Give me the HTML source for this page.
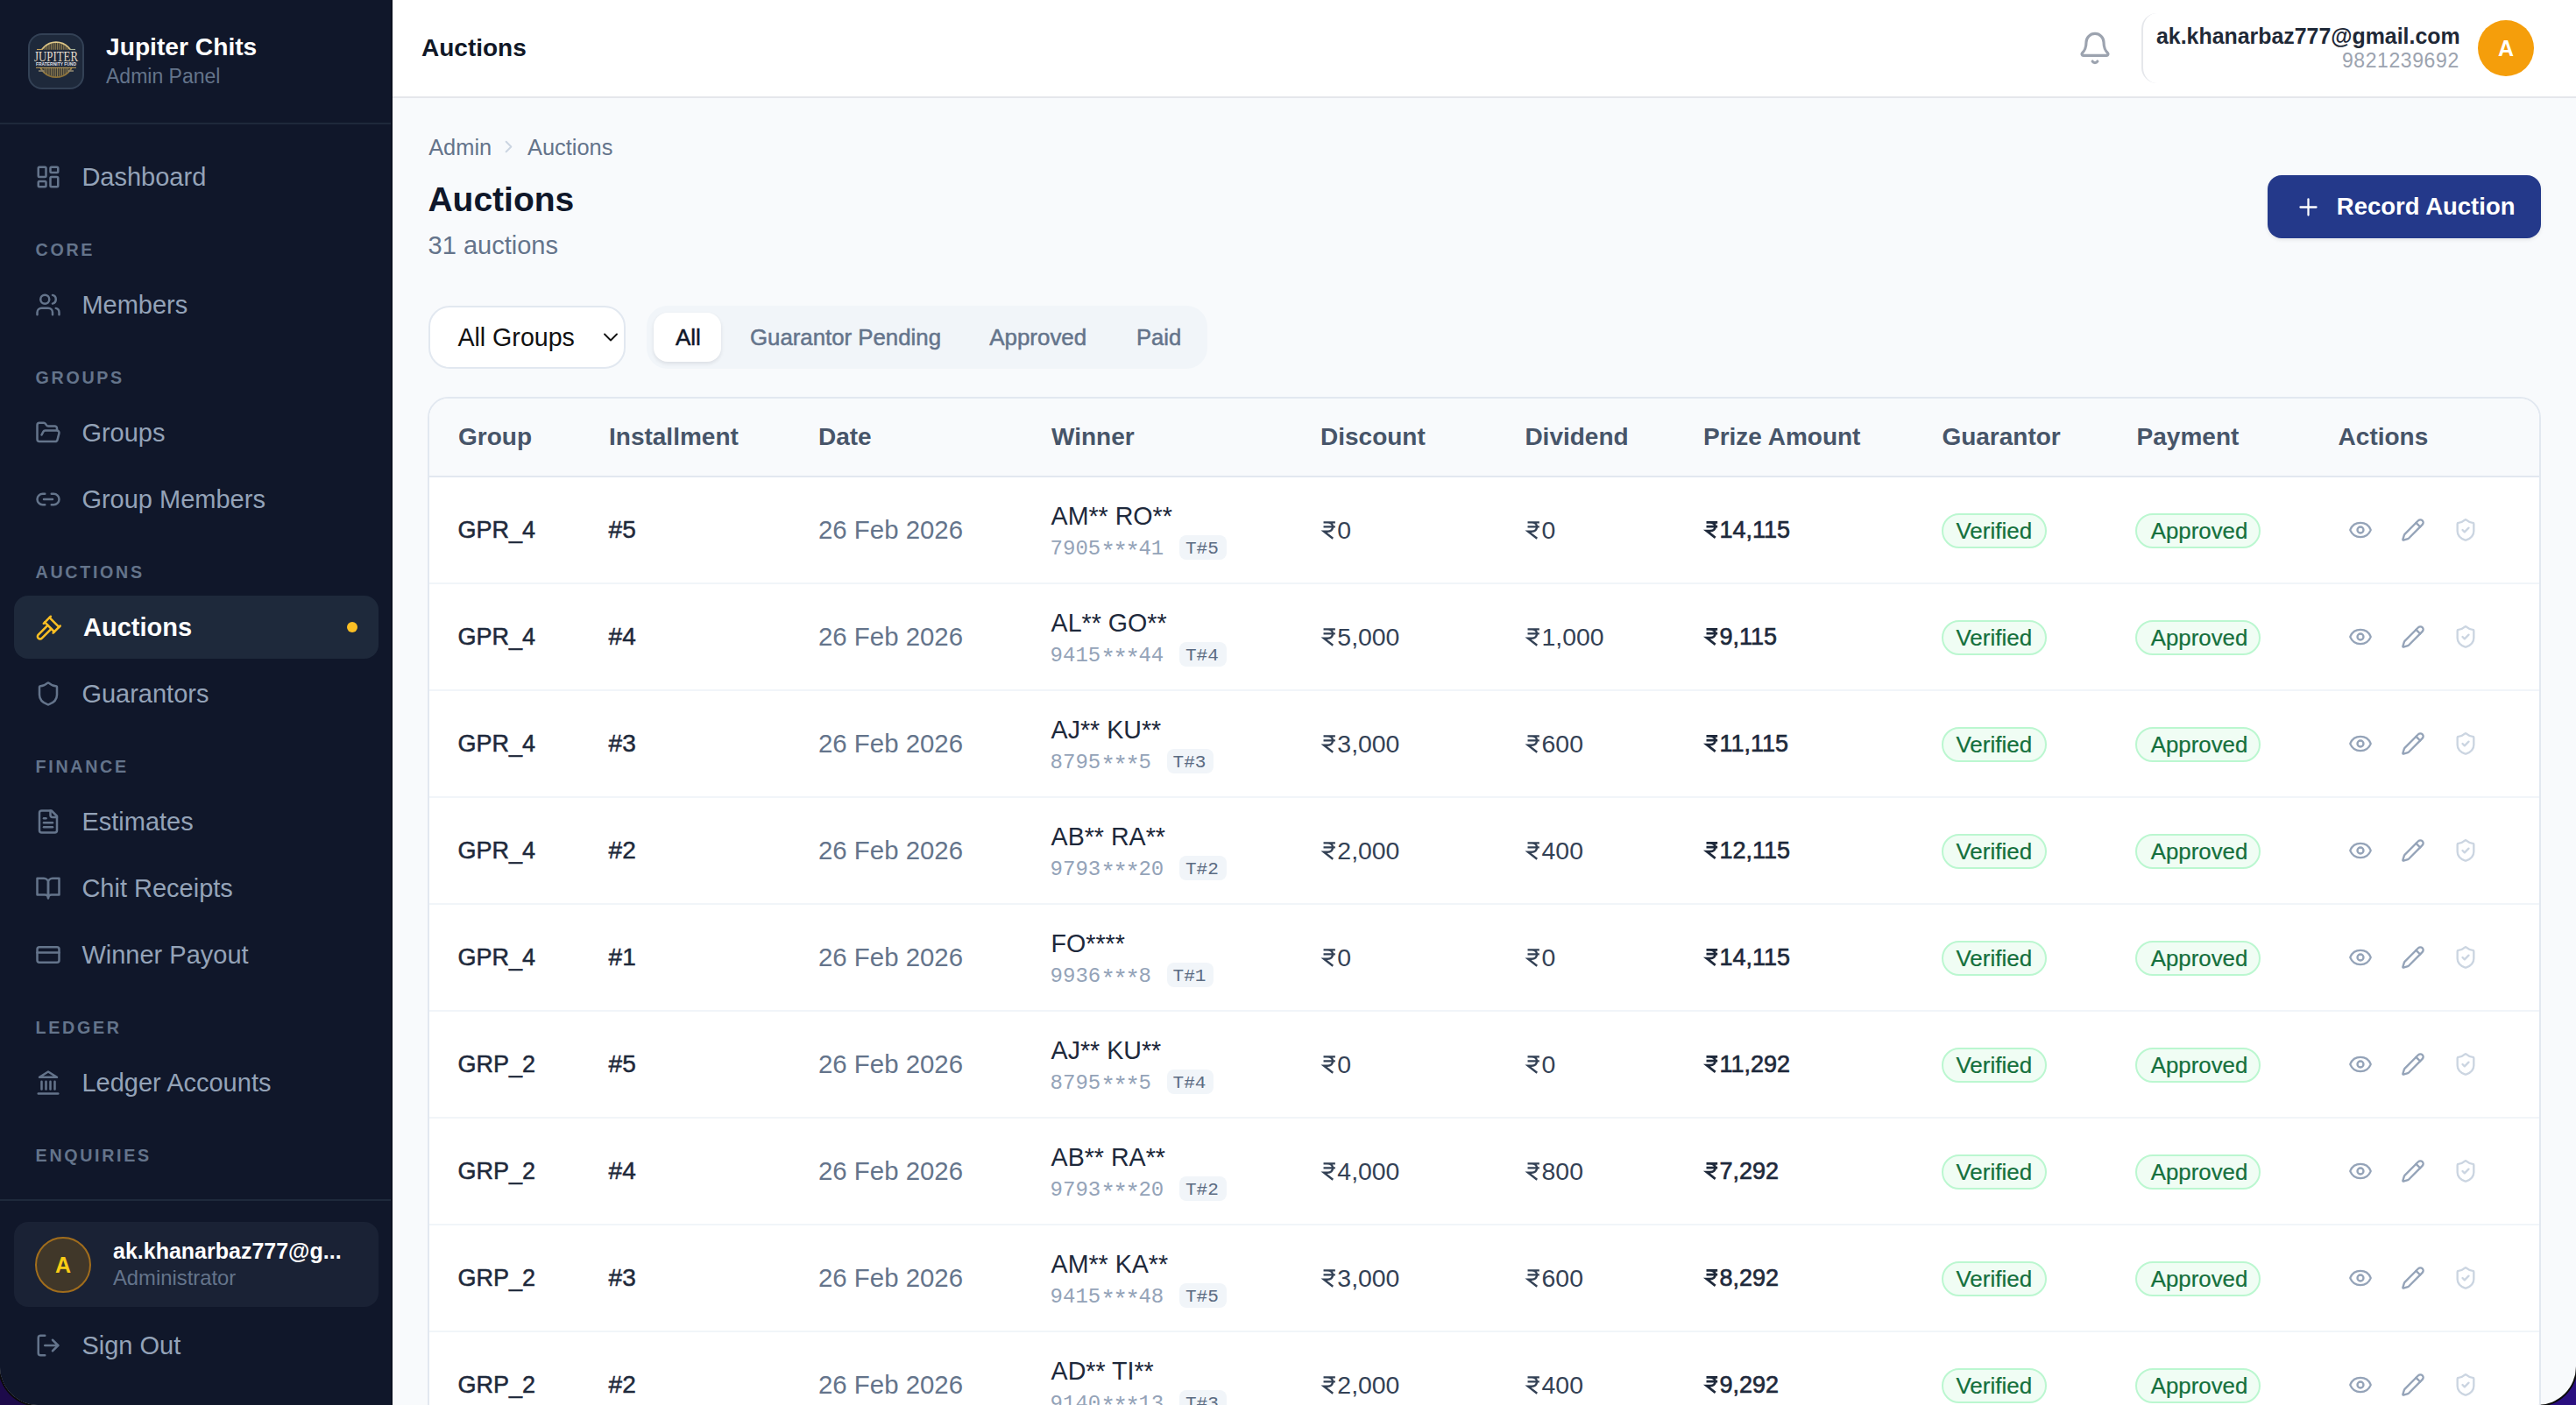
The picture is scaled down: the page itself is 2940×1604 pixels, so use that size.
<!DOCTYPE html><html><head><meta charset="utf-8"><title>Auctions</title><style>
*{box-sizing:border-box;margin:0;padding:0}
html,body{width:2940px;height:1604px;overflow:hidden;background:#2a0f7a}
body{background:linear-gradient(90deg,#1d0a4a,#2a0f80)}
#z{width:2940px;height:1604px;position:relative;overflow:hidden;border-radius:0 0 44px 44px;background:#f8fafc;font-family:"Liberation Sans",sans-serif;box-shadow:0 0 0 2px #0a0a0a}
.t{position:absolute;white-space:nowrap}
.ic{position:absolute;display:block}
.rs{display:inline-block;width:0.5em;height:0.7em;vertical-align:0;margin-right:0.07em;overflow:visible}
.abs{position:absolute}
.ast{position:relative;top:5.2px;font-size:28px;line-height:0;letter-spacing:-2.8px;margin-right:1.2px}
</style></head><body><div id="z">
<div class="abs" style="left:0;top:0;width:448px;height:1604px;background:#10172a;border-right:2px solid #0b1120"></div>
<div class="abs" style="left:0;top:140px;width:446px;height:2px;background:#1e293b"></div>
<svg class="abs" style="left:32px;top:38px;width:64px;height:64px" viewBox="0 0 32 32"><defs><linearGradient id="gd" x1="0" y1="0" x2="0" y2="1"><stop offset="0" stop-color="#e0c98a"/><stop offset="1" stop-color="#8a6f36"/></linearGradient><linearGradient id="gt" x1="0" y1="0" x2="0" y2="1"><stop offset="0" stop-color="#f4efe6"/><stop offset="1" stop-color="#cbbfa6"/></linearGradient><clipPath id="cc"><circle cx="16" cy="15.1" r="9.6"/></clipPath></defs><rect x="0.5" y="0.5" width="31" height="31" rx="7.5" fill="#1e293b" stroke="#334155"/><circle cx="16" cy="15.1" r="10" fill="#3a3a36" stroke="url(#gd)" stroke-width="0.9"/><g stroke="#b79f62" stroke-width="0.4" opacity="0.9" clip-path="url(#cc)"><line x1="9.6" y1="5" x2="9.6" y2="25.2"/><line x1="10.8" y1="5" x2="10.8" y2="25.2"/><line x1="12" y1="5" x2="12" y2="25.2"/><line x1="13.2" y1="5" x2="13.2" y2="25.2"/><line x1="14.4" y1="5" x2="14.4" y2="25.2"/><line x1="15.6" y1="5" x2="15.6" y2="25.2"/><line x1="16.8" y1="5" x2="16.8" y2="25.2"/><line x1="18" y1="5" x2="18" y2="25.2"/><line x1="19.2" y1="5" x2="19.2" y2="25.2"/><line x1="20.4" y1="5" x2="20.4" y2="25.2"/><line x1="21.6" y1="5" x2="21.6" y2="25.2"/><line x1="22.8" y1="5" x2="22.8" y2="25.2"/></g><rect x="3" y="9.4" width="26" height="10.2" fill="#1e293b"/><line x1="4.5" y1="19.6" x2="27.5" y2="19.6" stroke="#c9a45a" stroke-width="0.55"/><line x1="5" y1="9.25" x2="8.3" y2="9.25" stroke="#c9a45a" stroke-width="0.55"/><line x1="23.7" y1="9.25" x2="27" y2="9.25" stroke="#aab59a" stroke-width="0.55"/><text x="16" y="15.95" text-anchor="middle" font-family="Liberation Serif" font-size="8.2" fill="url(#gt)" textLength="25" lengthAdjust="spacingAndGlyphs">JUPITER</text><text x="16" y="18.5" text-anchor="middle" font-family="Liberation Sans" font-weight="bold" font-size="2.6" fill="#e2e2ea" textLength="23" lengthAdjust="spacingAndGlyphs">FRATERNITY FUND</text><rect x="6" y="21" width="3.2" height="1" fill="#8c8470" opacity="0.8"/><rect x="22.8" y="21" width="3.2" height="1" fill="#8c8470" opacity="0.8"/></svg>
<div class="t" style="left:121px;top:33.3px;font-size:28.2px;line-height:40px;color:#ffffff;font-weight:bold;">Jupiter Chits</div>
<div class="t" style="left:121px;top:67px;font-size:23px;line-height:40px;color:#64748b;font-weight:normal;">Admin Panel</div>
<svg class="ic" style="left:40px;top:187px;width:30px;height:30px;" viewBox="0 0 24 24" fill="none" stroke="#64748b" stroke-width="2" stroke-linecap="round" stroke-linejoin="round"><rect width="7" height="9" x="3" y="3" rx="1"/><rect width="7" height="5" x="14" y="3" rx="1"/><rect width="7" height="9" x="14" y="12" rx="1"/><rect width="7" height="5" x="3" y="16" rx="1"/></svg><div class="t" style="left:93.4px;top:182px;font-size:29px;line-height:40px;color:#94a3b8;font-weight:normal;">Dashboard</div>
<div class="t" style="left:40.6px;top:265px;font-size:19.7px;line-height:40px;color:#64748b;font-weight:bold;letter-spacing:2.66px;">CORE</div>
<svg class="ic" style="left:40px;top:333px;width:30px;height:30px;" viewBox="0 0 24 24" fill="none" stroke="#64748b" stroke-width="2" stroke-linecap="round" stroke-linejoin="round"><path d="M16 21v-2a4 4 0 0 0-4-4H6a4 4 0 0 0-4 4v2"/><circle cx="9" cy="7" r="4"/><path d="M22 21v-2a4 4 0 0 0-3-3.87"/><path d="M16 3.13a4 4 0 0 1 0 7.75"/></svg><div class="t" style="left:93.4px;top:328px;font-size:29px;line-height:40px;color:#94a3b8;font-weight:normal;">Members</div>
<div class="t" style="left:40.6px;top:411px;font-size:19.7px;line-height:40px;color:#64748b;font-weight:bold;letter-spacing:2.66px;">GROUPS</div>
<svg class="ic" style="left:40px;top:479px;width:30px;height:30px;" viewBox="0 0 24 24" fill="none" stroke="#64748b" stroke-width="2" stroke-linecap="round" stroke-linejoin="round"><path d="m6 14 1.5-2.9A2 2 0 0 1 9.24 10H20a2 2 0 0 1 1.94 2.5l-1.54 6a2 2 0 0 1-1.95 1.5H4a2 2 0 0 1-2-2V5a2 2 0 0 1 2-2h3.9a2 2 0 0 1 1.69.9l.81 1.2a2 2 0 0 0 1.67.9H18a2 2 0 0 1 2 2v2"/></svg><div class="t" style="left:93.4px;top:474px;font-size:29px;line-height:40px;color:#94a3b8;font-weight:normal;">Groups</div>
<svg class="ic" style="left:40px;top:555px;width:30px;height:30px;" viewBox="0 0 24 24" fill="none" stroke="#64748b" stroke-width="2" stroke-linecap="round" stroke-linejoin="round"><path d="M9 17H7A5 5 0 0 1 7 7h2"/><path d="M15 7h2a5 5 0 1 1 0 10h-2"/><line x1="8" x2="16" y1="12" y2="12"/></svg><div class="t" style="left:93.4px;top:550px;font-size:29px;line-height:40px;color:#94a3b8;font-weight:normal;">Group Members</div>
<div class="t" style="left:40.6px;top:632.6px;font-size:19.7px;line-height:40px;color:#64748b;font-weight:bold;letter-spacing:2.66px;">AUCTIONS</div>
<div class="abs" style="left:16px;top:680px;width:416px;height:72px;border-radius:16px;background:#1e293b"></div><svg class="ic" style="left:38.6px;top:701.2px;width:32.4px;height:32.4px;" viewBox="0 0 24 24" fill="none" stroke="#fbbf24" stroke-width="1.85" stroke-linecap="round" stroke-linejoin="round"><path d="m14.5 12.5-8 8a2.119 2.119 0 1 1-3-3l8-8"/><path d="m16 16 6-6"/><path d="m8 8 6-6"/><path d="m9 7 8 8"/><path d="m21 11-8-8"/></svg><div class="t" style="left:95px;top:696px;font-size:29px;line-height:40px;color:#ffffff;font-weight:bold;">Auctions</div><div class="abs" style="left:396px;top:710px;width:12px;height:12px;border-radius:6px;background:#fbbf24"></div>
<svg class="ic" style="left:40px;top:777px;width:30px;height:30px;" viewBox="0 0 24 24" fill="none" stroke="#64748b" stroke-width="2" stroke-linecap="round" stroke-linejoin="round"><path d="M20 13c0 5-3.5 7.5-7.66 8.95a1 1 0 0 1-.67-.01C7.5 20.5 4 18 4 13V6a1 1 0 0 1 1-1c2 0 4.5-1.2 6.24-2.72a1.17 1.17 0 0 1 1.52 0C14.51 3.810 17 5 19 5a1 1 0 0 1 1 1z"/></svg><div class="t" style="left:93.4px;top:772px;font-size:29px;line-height:40px;color:#94a3b8;font-weight:normal;">Guarantors</div>
<div class="t" style="left:40.6px;top:854.6px;font-size:19.7px;line-height:40px;color:#64748b;font-weight:bold;letter-spacing:2.66px;">FINANCE</div>
<svg class="ic" style="left:40px;top:923px;width:30px;height:30px;" viewBox="0 0 24 24" fill="none" stroke="#64748b" stroke-width="2" stroke-linecap="round" stroke-linejoin="round"><path d="M15 2H6a2 2 0 0 0-2 2v16a2 2 0 0 0 2 2h12a2 2 0 0 0 2-2V7Z"/><path d="M14 2v4a2 2 0 0 0 2 2h4"/><path d="M10 9H8"/><path d="M16 13H8"/><path d="M16 17H8"/></svg><div class="t" style="left:93.4px;top:918px;font-size:29px;line-height:40px;color:#94a3b8;font-weight:normal;">Estimates</div>
<svg class="ic" style="left:40px;top:999px;width:30px;height:30px;" viewBox="0 0 24 24" fill="none" stroke="#64748b" stroke-width="2" stroke-linecap="round" stroke-linejoin="round"><path d="M2 3h6a4 4 0 0 1 4 4v14a3 3 0 0 0-3-3H2z"/><path d="M22 3h-6a4 4 0 0 0-4 4v14a3 3 0 0 1 3-3h7z"/></svg><div class="t" style="left:93.4px;top:994px;font-size:29px;line-height:40px;color:#94a3b8;font-weight:normal;">Chit Receipts</div>
<svg class="ic" style="left:40px;top:1075px;width:30px;height:30px;" viewBox="0 0 24 24" fill="none" stroke="#64748b" stroke-width="2" stroke-linecap="round" stroke-linejoin="round"><rect width="20" height="14" x="2" y="5" rx="2"/><line x1="2" x2="22" y1="10" y2="10"/></svg><div class="t" style="left:93.4px;top:1070px;font-size:29px;line-height:40px;color:#94a3b8;font-weight:normal;">Winner Payout</div>
<div class="t" style="left:40.6px;top:1152.6px;font-size:19.7px;line-height:40px;color:#64748b;font-weight:bold;letter-spacing:2.66px;">LEDGER</div>
<svg class="ic" style="left:40px;top:1221px;width:30px;height:30px;" viewBox="0 0 24 24" fill="none" stroke="#64748b" stroke-width="2" stroke-linecap="round" stroke-linejoin="round"><line x1="3" x2="21" y1="22" y2="22"/><line x1="6" x2="6" y1="18" y2="11"/><line x1="10" x2="10" y1="18" y2="11"/><line x1="14" x2="14" y1="18" y2="11"/><line x1="18" x2="18" y1="18" y2="11"/><polygon points="12 2 20 7 4 7"/></svg><div class="t" style="left:93.4px;top:1216px;font-size:29px;line-height:40px;color:#94a3b8;font-weight:normal;">Ledger Accounts</div>
<div class="t" style="left:40.6px;top:1299px;font-size:19.7px;line-height:40px;color:#64748b;font-weight:bold;letter-spacing:2.66px;">ENQUIRIES</div>
<div class="abs" style="left:0;top:1369px;width:446px;height:2px;background:#1e293b"></div>
<div class="abs" style="left:0;top:1371px;width:446px;height:234px;background:#10172a"></div>
<div class="abs" style="left:16px;top:1395px;width:416px;height:97px;border-radius:16px;background:#1a2235"></div>
<div class="abs" style="left:40px;top:1412px;width:64px;height:64px;border-radius:32px;background:#403729;border:2px solid #a16d1c"></div>
<div class="t" style="left:40px;top:1424px;font-size:25px;line-height:40px;color:#facc15;font-weight:bold;width:64px;text-align:center;">A</div>
<div class="t" style="left:129px;top:1408px;font-size:25px;line-height:40px;color:#ffffff;font-weight:bold;">ak.khanarbaz777@g...</div>
<div class="t" style="left:129px;top:1439px;font-size:23.8px;line-height:40px;color:#64748b;font-weight:normal;">Administrator</div>
<svg class="ic" style="left:40px;top:1521px;width:30px;height:30px;" viewBox="0 0 24 24" fill="none" stroke="#64748b" stroke-width="2" stroke-linecap="round" stroke-linejoin="round"><path d="M9 21H5a2 2 0 0 1-2-2V5a2 2 0 0 1 2-2h4"/><polyline points="16 17 21 12 16 7"/><line x1="21" x2="9" y1="12" y2="12"/></svg>
<div class="t" style="left:93.4px;top:1516px;font-size:29px;line-height:40px;color:#94a3b8;font-weight:normal;">Sign Out</div>
<div class="abs" style="left:448px;top:0;width:2492px;height:112px;background:#ffffff;border-bottom:2px solid #e5e7eb"></div>
<div class="t" style="left:481px;top:35px;font-size:28px;line-height:40px;color:#111827;font-weight:bold;">Auctions</div>
<svg class="ic" style="left:2371px;top:35px;width:40px;height:40px;" viewBox="0 0 24 24" fill="none" stroke="#9ca3af" stroke-width="1.9" stroke-linecap="round" stroke-linejoin="round"><path d="M10.268 21a2 2 0 0 0 3.464 0"/><path d="M3.262 15.326A1 1 0 0 0 4 17h16a1 1 0 0 0 .74-1.673C19.41 13.956 18 12.499 18 8A6 6 0 0 0 6 8c0 4.499-1.411 5.956-2.738 7.326"/></svg>
<div class="abs" style="left:2443.6px;top:15px;width:120px;height:80px;border-left:2px solid #e5e7eb;border-radius:18px 0 0 18px"></div>
<div class="t" style="left:2461px;top:21.2px;font-size:24.9px;line-height:40px;color:#1f2937;font-weight:bold;width:346px;text-align:right;">ak.khanarbaz777@gmail.com</div>
<div class="t" style="left:2406.8px;top:49.2px;font-size:23px;line-height:40px;color:#9ca3af;font-weight:normal;letter-spacing:0.6px;width:400px;text-align:right;">9821239692</div>
<div class="abs" style="left:2828px;top:23px;width:64px;height:64px;border-radius:32px;background:#f59e0b"></div>
<div class="t" style="left:2828px;top:35px;font-size:25px;line-height:40px;color:#ffffff;font-weight:bold;width:64px;text-align:center;">A</div>
<div class="t" style="left:489.2px;top:148px;font-size:25.4px;line-height:40px;color:#64748b;font-weight:normal;">Admin</div>
<svg class="ic" style="left:569px;top:156.4px;width:23px;height:23px;" viewBox="0 0 24 24" fill="none" stroke="#cbd5e1" stroke-width="2" stroke-linecap="round" stroke-linejoin="round"><path d="m9 18 6-6-6-6"/></svg>
<div class="t" style="left:602px;top:148px;font-size:25.4px;line-height:40px;color:#64748b;font-weight:normal;">Auctions</div>
<div class="t" style="left:488.4px;top:208.2px;font-size:39px;line-height:40px;color:#0f172a;font-weight:bold;">Auctions</div>
<div class="t" style="left:488.6px;top:260px;font-size:29px;line-height:40px;color:#64748b;font-weight:normal;">31 auctions</div>
<div class="abs" style="left:2588px;top:200px;width:312px;height:72px;border-radius:16px;background:#24398a;box-shadow:0 2px 4px rgba(0,0,0,0.08)"></div>
<svg class="ic" style="left:2619.3px;top:220.6px;width:31px;height:31px;" viewBox="0 0 24 24" fill="none" stroke="#ffffff" stroke-width="1.75" stroke-linecap="round" stroke-linejoin="round"><path d="M5 12h14"/><path d="M12 5v14"/></svg>
<div class="t" style="left:2666.8px;top:216.2px;font-size:27.5px;line-height:40px;color:#ffffff;font-weight:bold;">Record Auction</div>
<div class="abs" style="left:489px;top:349px;width:224.6px;height:72px;border-radius:24px;background:#ffffff;border:2px solid #e2e8f0"></div>
<div class="t" style="left:522.4px;top:365.4px;font-size:28.6px;line-height:40px;color:#111111;font-weight:normal;">All Groups</div>
<svg class="ic" style="left:683px;top:371px;width:28px;height:28px;" viewBox="0 0 24 24" fill="none" stroke="#111111" stroke-width="1.6" stroke-linecap="round" stroke-linejoin="round"><path d="m6 9 6 6 6-6"/></svg>
<div class="abs" style="left:738px;top:349px;width:640px;height:72px;border-radius:24px;background:#f1f5f9"></div>
<div class="abs" style="left:746px;top:357px;width:77px;height:56px;border-radius:16px;background:#ffffff;box-shadow:0 2px 4px rgba(15,23,42,0.10)"></div>
<div class="t" style="left:771px;top:365.2px;font-size:26px;line-height:40px;color:#0f172a;font-weight:normal;-webkit-text-stroke:0.5px currentColor;">All</div>
<div class="t" style="left:856px;top:365.2px;font-size:25.8px;line-height:40px;color:#64748b;font-weight:normal;-webkit-text-stroke:0.5px currentColor;">Guarantor Pending</div>
<div class="t" style="left:1129.2px;top:365.2px;font-size:25.94px;line-height:40px;color:#64748b;font-weight:normal;-webkit-text-stroke:0.5px currentColor;">Approved</div>
<div class="t" style="left:1297px;top:365.2px;font-size:25.52px;line-height:40px;color:#64748b;font-weight:normal;-webkit-text-stroke:0.5px currentColor;">Paid</div>
<div class="abs" style="left:488px;top:453px;width:2412px;height:1400px;border-radius:24px;background:#ffffff;border:2px solid #e2e8f0;overflow:hidden"><div class="abs" style="left:0;top:0;width:2408px;height:90px;background:#f8fafc;border-bottom:2px solid #e2e8f0"></div></div>
<div class="t" style="left:523px;top:478.8px;font-size:28px;line-height:40px;color:#475569;font-weight:bold;">Group</div>
<div class="t" style="left:695px;top:478.8px;font-size:28px;line-height:40px;color:#475569;font-weight:bold;">Installment</div>
<div class="t" style="left:934px;top:478.8px;font-size:28px;line-height:40px;color:#475569;font-weight:bold;">Date</div>
<div class="t" style="left:1200px;top:478.8px;font-size:28px;line-height:40px;color:#475569;font-weight:bold;">Winner</div>
<div class="t" style="left:1507px;top:478.8px;font-size:28px;line-height:40px;color:#475569;font-weight:bold;">Discount</div>
<div class="t" style="left:1740.4px;top:478.8px;font-size:28px;line-height:40px;color:#475569;font-weight:bold;">Dividend</div>
<div class="t" style="left:1944px;top:478.8px;font-size:28px;line-height:40px;color:#475569;font-weight:bold;">Prize Amount</div>
<div class="t" style="left:2216.4px;top:478.8px;font-size:28px;line-height:40px;color:#475569;font-weight:bold;">Guarantor</div>
<div class="t" style="left:2438.6px;top:478.8px;font-size:28px;line-height:40px;color:#475569;font-weight:bold;">Payment</div>
<div class="t" style="left:2668.6px;top:478.8px;font-size:28px;line-height:40px;color:#475569;font-weight:bold;">Actions</div>
<div class="abs" style="left:490px;top:665px;width:2408px;height:2px;background:#f1f5f9"></div>
<div class="t" style="left:522.6px;top:585px;font-size:27px;line-height:40px;color:#1e293b;font-weight:normal;-webkit-text-stroke:0.5px currentColor;">GPR_4</div>
<div class="t" style="left:694.6px;top:585px;font-size:28px;line-height:40px;color:#1e293b;font-weight:normal;-webkit-text-stroke:0.5px currentColor;">#5</div>
<div class="t" style="left:934px;top:585px;font-size:29.4px;line-height:40px;color:#64748b;font-weight:normal;">26 Feb 2026</div>
<div class="t" style="left:1199.6px;top:569.1px;font-size:28.6px;line-height:40px;color:#1e293b;font-weight:normal;">AM** RO**</div>
<div class="t" style="left:1198.6px;top:610.8px;font-size:24px;line-height:32px;color:#94a3b8;font-weight:normal;font-family:'Liberation Mono',monospace;">7905<span class="ast">***</span>41</div>
<div class="abs" style="left:1346px;top:610.8px;width:53.8px;height:28px;border-radius:8px;background:#f1f5f9"></div>
<div class="t" style="left:1353px;top:613.4px;font-size:21px;line-height:28px;color:#5b6b82;font-weight:normal;font-family:'Liberation Mono',monospace;">T#5</div>
<div class="t" style="left:1510.2px;top:585px;font-size:28.4px;line-height:40px;color:#334155;font-weight:normal;"><svg class="rs" viewBox="0 0 7 10" fill="none" stroke="currentColor" stroke-width="1.2" stroke-linecap="butt" stroke-linejoin="miter"><path d="M0.2 0.7H6.9M0.2 3.2H6.9M0.2 0.7H2.4C4.5 0.7 5.5 1.9 5.5 3.3C5.5 4.8 4.4 5.9 2.5 5.9H0.4L5.6 9.95"/></svg>0</div>
<div class="t" style="left:1743.4px;top:585px;font-size:28.4px;line-height:40px;color:#334155;font-weight:normal;"><svg class="rs" viewBox="0 0 7 10" fill="none" stroke="currentColor" stroke-width="1.2" stroke-linecap="butt" stroke-linejoin="miter"><path d="M0.2 0.7H6.9M0.2 3.2H6.9M0.2 0.7H2.4C4.5 0.7 5.5 1.9 5.5 3.3C5.5 4.8 4.4 5.9 2.5 5.9H0.4L5.6 9.95"/></svg>0</div>
<div class="t" style="left:1947px;top:585px;font-size:27px;line-height:40px;color:#1e293b;font-weight:normal;-webkit-text-stroke:0.64px currentColor;"><svg class="rs" viewBox="0 0 7 10" fill="none" stroke="currentColor" stroke-width="1.45" stroke-linecap="butt" stroke-linejoin="miter"><path d="M0.2 0.7H6.9M0.2 3.2H6.9M0.2 0.7H2.4C4.5 0.7 5.5 1.9 5.5 3.3C5.5 4.8 4.4 5.9 2.5 5.9H0.4L5.6 9.95"/></svg>14,115</div>
<div class="abs" style="left:2215.6px;top:586px;width:120px;height:40px;border-radius:20px;background:#f0fdf4;border:2px solid #bbf7d0"></div>
<div class="t" style="left:2232.4px;top:588px;font-size:26px;line-height:36px;color:#15703d;font-weight:normal;-webkit-text-stroke:0.24px currentColor;">Verified</div>
<div class="abs" style="left:2437.2px;top:586px;width:143px;height:40px;border-radius:20px;background:#f0fdf4;border:2px solid #bbf7d0"></div>
<div class="t" style="left:2454.8px;top:588px;font-size:25.8px;line-height:36px;color:#15703d;font-weight:normal;-webkit-text-stroke:0.24px currentColor;">Approved</div>
<svg class="ic" style="left:2680px;top:591px;width:28px;height:28px;" viewBox="0 0 24 24" fill="none" stroke="#94a3b8" stroke-width="2" stroke-linecap="round" stroke-linejoin="round"><path d="M2.062 12.348a1 1 0 0 1 0-.696 10.75 10.75 0 0 1 19.876 0 1 1 0 0 1 0 .696 10.75 10.75 0 0 1-19.876 0"/><circle cx="12" cy="12" r="3"/></svg>
<svg class="ic" style="left:2740.4px;top:591px;width:28px;height:28px;" viewBox="0 0 24 24" fill="none" stroke="#94a3b8" stroke-width="2" stroke-linecap="round" stroke-linejoin="round"><path d="M21.174 6.812a1 1 0 0 0-3.986-3.987L3.842 16.174a2 2 0 0 0-.5.83l-1.321 4.352a.5.5 0 0 0 .623.622l4.353-1.32a2 2 0 0 0 .83-.497z"/><path d="m15 5 4 4"/></svg>
<svg class="ic" style="left:2800px;top:591px;width:28px;height:28px;" viewBox="0 0 24 24" fill="none" stroke="#cbd5e1" stroke-width="2" stroke-linecap="round" stroke-linejoin="round"><path d="M20 13c0 5-3.5 7.5-7.66 8.95a1 1 0 0 1-.67-.01C7.5 20.5 4 18 4 13V6a1 1 0 0 1 1-1c2 0 4.5-1.2 6.24-2.72a1.17 1.17 0 0 1 1.52 0C14.51 3.81 17 5 19 5a1 1 0 0 1 1 1z"/><path d="m9 12 2 2 4-4"/></svg>
<div class="abs" style="left:490px;top:787px;width:2408px;height:2px;background:#f1f5f9"></div>
<div class="t" style="left:522.6px;top:707px;font-size:27px;line-height:40px;color:#1e293b;font-weight:normal;-webkit-text-stroke:0.5px currentColor;">GPR_4</div>
<div class="t" style="left:694.6px;top:707px;font-size:28px;line-height:40px;color:#1e293b;font-weight:normal;-webkit-text-stroke:0.5px currentColor;">#4</div>
<div class="t" style="left:934px;top:707px;font-size:29.4px;line-height:40px;color:#64748b;font-weight:normal;">26 Feb 2026</div>
<div class="t" style="left:1199.6px;top:691.1px;font-size:28.6px;line-height:40px;color:#1e293b;font-weight:normal;">AL** GO**</div>
<div class="t" style="left:1198.6px;top:732.8px;font-size:24px;line-height:32px;color:#94a3b8;font-weight:normal;font-family:'Liberation Mono',monospace;">9415<span class="ast">***</span>44</div>
<div class="abs" style="left:1346px;top:732.8px;width:53.8px;height:28px;border-radius:8px;background:#f1f5f9"></div>
<div class="t" style="left:1353px;top:735.4px;font-size:21px;line-height:28px;color:#5b6b82;font-weight:normal;font-family:'Liberation Mono',monospace;">T#4</div>
<div class="t" style="left:1510.2px;top:707px;font-size:28.4px;line-height:40px;color:#334155;font-weight:normal;"><svg class="rs" viewBox="0 0 7 10" fill="none" stroke="currentColor" stroke-width="1.2" stroke-linecap="butt" stroke-linejoin="miter"><path d="M0.2 0.7H6.9M0.2 3.2H6.9M0.2 0.7H2.4C4.5 0.7 5.5 1.9 5.5 3.3C5.5 4.8 4.4 5.9 2.5 5.9H0.4L5.6 9.95"/></svg>5,000</div>
<div class="t" style="left:1743.4px;top:707px;font-size:28.4px;line-height:40px;color:#334155;font-weight:normal;"><svg class="rs" viewBox="0 0 7 10" fill="none" stroke="currentColor" stroke-width="1.2" stroke-linecap="butt" stroke-linejoin="miter"><path d="M0.2 0.7H6.9M0.2 3.2H6.9M0.2 0.7H2.4C4.5 0.7 5.5 1.9 5.5 3.3C5.5 4.8 4.4 5.9 2.5 5.9H0.4L5.6 9.95"/></svg>1,000</div>
<div class="t" style="left:1947px;top:707px;font-size:27px;line-height:40px;color:#1e293b;font-weight:normal;-webkit-text-stroke:0.64px currentColor;"><svg class="rs" viewBox="0 0 7 10" fill="none" stroke="currentColor" stroke-width="1.45" stroke-linecap="butt" stroke-linejoin="miter"><path d="M0.2 0.7H6.9M0.2 3.2H6.9M0.2 0.7H2.4C4.5 0.7 5.5 1.9 5.5 3.3C5.5 4.8 4.4 5.9 2.5 5.9H0.4L5.6 9.95"/></svg>9,115</div>
<div class="abs" style="left:2215.6px;top:708px;width:120px;height:40px;border-radius:20px;background:#f0fdf4;border:2px solid #bbf7d0"></div>
<div class="t" style="left:2232.4px;top:710px;font-size:26px;line-height:36px;color:#15703d;font-weight:normal;-webkit-text-stroke:0.24px currentColor;">Verified</div>
<div class="abs" style="left:2437.2px;top:708px;width:143px;height:40px;border-radius:20px;background:#f0fdf4;border:2px solid #bbf7d0"></div>
<div class="t" style="left:2454.8px;top:710px;font-size:25.8px;line-height:36px;color:#15703d;font-weight:normal;-webkit-text-stroke:0.24px currentColor;">Approved</div>
<svg class="ic" style="left:2680px;top:713px;width:28px;height:28px;" viewBox="0 0 24 24" fill="none" stroke="#94a3b8" stroke-width="2" stroke-linecap="round" stroke-linejoin="round"><path d="M2.062 12.348a1 1 0 0 1 0-.696 10.75 10.75 0 0 1 19.876 0 1 1 0 0 1 0 .696 10.75 10.75 0 0 1-19.876 0"/><circle cx="12" cy="12" r="3"/></svg>
<svg class="ic" style="left:2740.4px;top:713px;width:28px;height:28px;" viewBox="0 0 24 24" fill="none" stroke="#94a3b8" stroke-width="2" stroke-linecap="round" stroke-linejoin="round"><path d="M21.174 6.812a1 1 0 0 0-3.986-3.987L3.842 16.174a2 2 0 0 0-.5.83l-1.321 4.352a.5.5 0 0 0 .623.622l4.353-1.32a2 2 0 0 0 .83-.497z"/><path d="m15 5 4 4"/></svg>
<svg class="ic" style="left:2800px;top:713px;width:28px;height:28px;" viewBox="0 0 24 24" fill="none" stroke="#cbd5e1" stroke-width="2" stroke-linecap="round" stroke-linejoin="round"><path d="M20 13c0 5-3.5 7.5-7.66 8.95a1 1 0 0 1-.67-.01C7.5 20.5 4 18 4 13V6a1 1 0 0 1 1-1c2 0 4.5-1.2 6.24-2.72a1.17 1.17 0 0 1 1.52 0C14.51 3.81 17 5 19 5a1 1 0 0 1 1 1z"/><path d="m9 12 2 2 4-4"/></svg>
<div class="abs" style="left:490px;top:909px;width:2408px;height:2px;background:#f1f5f9"></div>
<div class="t" style="left:522.6px;top:829px;font-size:27px;line-height:40px;color:#1e293b;font-weight:normal;-webkit-text-stroke:0.5px currentColor;">GPR_4</div>
<div class="t" style="left:694.6px;top:829px;font-size:28px;line-height:40px;color:#1e293b;font-weight:normal;-webkit-text-stroke:0.5px currentColor;">#3</div>
<div class="t" style="left:934px;top:829px;font-size:29.4px;line-height:40px;color:#64748b;font-weight:normal;">26 Feb 2026</div>
<div class="t" style="left:1199.6px;top:813.1px;font-size:28.6px;line-height:40px;color:#1e293b;font-weight:normal;">AJ** KU**</div>
<div class="t" style="left:1198.6px;top:854.8px;font-size:24px;line-height:32px;color:#94a3b8;font-weight:normal;font-family:'Liberation Mono',monospace;">8795<span class="ast">***</span>5</div>
<div class="abs" style="left:1331.6px;top:854.8px;width:53.8px;height:28px;border-radius:8px;background:#f1f5f9"></div>
<div class="t" style="left:1338.6px;top:857.4px;font-size:21px;line-height:28px;color:#5b6b82;font-weight:normal;font-family:'Liberation Mono',monospace;">T#3</div>
<div class="t" style="left:1510.2px;top:829px;font-size:28.4px;line-height:40px;color:#334155;font-weight:normal;"><svg class="rs" viewBox="0 0 7 10" fill="none" stroke="currentColor" stroke-width="1.2" stroke-linecap="butt" stroke-linejoin="miter"><path d="M0.2 0.7H6.9M0.2 3.2H6.9M0.2 0.7H2.4C4.5 0.7 5.5 1.9 5.5 3.3C5.5 4.8 4.4 5.9 2.5 5.9H0.4L5.6 9.95"/></svg>3,000</div>
<div class="t" style="left:1743.4px;top:829px;font-size:28.4px;line-height:40px;color:#334155;font-weight:normal;"><svg class="rs" viewBox="0 0 7 10" fill="none" stroke="currentColor" stroke-width="1.2" stroke-linecap="butt" stroke-linejoin="miter"><path d="M0.2 0.7H6.9M0.2 3.2H6.9M0.2 0.7H2.4C4.5 0.7 5.5 1.9 5.5 3.3C5.5 4.8 4.4 5.9 2.5 5.9H0.4L5.6 9.95"/></svg>600</div>
<div class="t" style="left:1947px;top:829px;font-size:27px;line-height:40px;color:#1e293b;font-weight:normal;-webkit-text-stroke:0.64px currentColor;"><svg class="rs" viewBox="0 0 7 10" fill="none" stroke="currentColor" stroke-width="1.45" stroke-linecap="butt" stroke-linejoin="miter"><path d="M0.2 0.7H6.9M0.2 3.2H6.9M0.2 0.7H2.4C4.5 0.7 5.5 1.9 5.5 3.3C5.5 4.8 4.4 5.9 2.5 5.9H0.4L5.6 9.95"/></svg>11,115</div>
<div class="abs" style="left:2215.6px;top:830px;width:120px;height:40px;border-radius:20px;background:#f0fdf4;border:2px solid #bbf7d0"></div>
<div class="t" style="left:2232.4px;top:832px;font-size:26px;line-height:36px;color:#15703d;font-weight:normal;-webkit-text-stroke:0.24px currentColor;">Verified</div>
<div class="abs" style="left:2437.2px;top:830px;width:143px;height:40px;border-radius:20px;background:#f0fdf4;border:2px solid #bbf7d0"></div>
<div class="t" style="left:2454.8px;top:832px;font-size:25.8px;line-height:36px;color:#15703d;font-weight:normal;-webkit-text-stroke:0.24px currentColor;">Approved</div>
<svg class="ic" style="left:2680px;top:835px;width:28px;height:28px;" viewBox="0 0 24 24" fill="none" stroke="#94a3b8" stroke-width="2" stroke-linecap="round" stroke-linejoin="round"><path d="M2.062 12.348a1 1 0 0 1 0-.696 10.75 10.75 0 0 1 19.876 0 1 1 0 0 1 0 .696 10.75 10.75 0 0 1-19.876 0"/><circle cx="12" cy="12" r="3"/></svg>
<svg class="ic" style="left:2740.4px;top:835px;width:28px;height:28px;" viewBox="0 0 24 24" fill="none" stroke="#94a3b8" stroke-width="2" stroke-linecap="round" stroke-linejoin="round"><path d="M21.174 6.812a1 1 0 0 0-3.986-3.987L3.842 16.174a2 2 0 0 0-.5.83l-1.321 4.352a.5.5 0 0 0 .623.622l4.353-1.32a2 2 0 0 0 .83-.497z"/><path d="m15 5 4 4"/></svg>
<svg class="ic" style="left:2800px;top:835px;width:28px;height:28px;" viewBox="0 0 24 24" fill="none" stroke="#cbd5e1" stroke-width="2" stroke-linecap="round" stroke-linejoin="round"><path d="M20 13c0 5-3.5 7.5-7.66 8.95a1 1 0 0 1-.67-.01C7.5 20.5 4 18 4 13V6a1 1 0 0 1 1-1c2 0 4.5-1.2 6.24-2.72a1.17 1.17 0 0 1 1.52 0C14.51 3.81 17 5 19 5a1 1 0 0 1 1 1z"/><path d="m9 12 2 2 4-4"/></svg>
<div class="abs" style="left:490px;top:1031px;width:2408px;height:2px;background:#f1f5f9"></div>
<div class="t" style="left:522.6px;top:951px;font-size:27px;line-height:40px;color:#1e293b;font-weight:normal;-webkit-text-stroke:0.5px currentColor;">GPR_4</div>
<div class="t" style="left:694.6px;top:951px;font-size:28px;line-height:40px;color:#1e293b;font-weight:normal;-webkit-text-stroke:0.5px currentColor;">#2</div>
<div class="t" style="left:934px;top:951px;font-size:29.4px;line-height:40px;color:#64748b;font-weight:normal;">26 Feb 2026</div>
<div class="t" style="left:1199.6px;top:935.1px;font-size:28.6px;line-height:40px;color:#1e293b;font-weight:normal;">AB** RA**</div>
<div class="t" style="left:1198.6px;top:976.8px;font-size:24px;line-height:32px;color:#94a3b8;font-weight:normal;font-family:'Liberation Mono',monospace;">9793<span class="ast">***</span>20</div>
<div class="abs" style="left:1346px;top:976.8px;width:53.8px;height:28px;border-radius:8px;background:#f1f5f9"></div>
<div class="t" style="left:1353px;top:979.4px;font-size:21px;line-height:28px;color:#5b6b82;font-weight:normal;font-family:'Liberation Mono',monospace;">T#2</div>
<div class="t" style="left:1510.2px;top:951px;font-size:28.4px;line-height:40px;color:#334155;font-weight:normal;"><svg class="rs" viewBox="0 0 7 10" fill="none" stroke="currentColor" stroke-width="1.2" stroke-linecap="butt" stroke-linejoin="miter"><path d="M0.2 0.7H6.9M0.2 3.2H6.9M0.2 0.7H2.4C4.5 0.7 5.5 1.9 5.5 3.3C5.5 4.8 4.4 5.9 2.5 5.9H0.4L5.6 9.95"/></svg>2,000</div>
<div class="t" style="left:1743.4px;top:951px;font-size:28.4px;line-height:40px;color:#334155;font-weight:normal;"><svg class="rs" viewBox="0 0 7 10" fill="none" stroke="currentColor" stroke-width="1.2" stroke-linecap="butt" stroke-linejoin="miter"><path d="M0.2 0.7H6.9M0.2 3.2H6.9M0.2 0.7H2.4C4.5 0.7 5.5 1.9 5.5 3.3C5.5 4.8 4.4 5.9 2.5 5.9H0.4L5.6 9.95"/></svg>400</div>
<div class="t" style="left:1947px;top:951px;font-size:27px;line-height:40px;color:#1e293b;font-weight:normal;-webkit-text-stroke:0.64px currentColor;"><svg class="rs" viewBox="0 0 7 10" fill="none" stroke="currentColor" stroke-width="1.45" stroke-linecap="butt" stroke-linejoin="miter"><path d="M0.2 0.7H6.9M0.2 3.2H6.9M0.2 0.7H2.4C4.5 0.7 5.5 1.9 5.5 3.3C5.5 4.8 4.4 5.9 2.5 5.9H0.4L5.6 9.95"/></svg>12,115</div>
<div class="abs" style="left:2215.6px;top:952px;width:120px;height:40px;border-radius:20px;background:#f0fdf4;border:2px solid #bbf7d0"></div>
<div class="t" style="left:2232.4px;top:954px;font-size:26px;line-height:36px;color:#15703d;font-weight:normal;-webkit-text-stroke:0.24px currentColor;">Verified</div>
<div class="abs" style="left:2437.2px;top:952px;width:143px;height:40px;border-radius:20px;background:#f0fdf4;border:2px solid #bbf7d0"></div>
<div class="t" style="left:2454.8px;top:954px;font-size:25.8px;line-height:36px;color:#15703d;font-weight:normal;-webkit-text-stroke:0.24px currentColor;">Approved</div>
<svg class="ic" style="left:2680px;top:957px;width:28px;height:28px;" viewBox="0 0 24 24" fill="none" stroke="#94a3b8" stroke-width="2" stroke-linecap="round" stroke-linejoin="round"><path d="M2.062 12.348a1 1 0 0 1 0-.696 10.75 10.75 0 0 1 19.876 0 1 1 0 0 1 0 .696 10.75 10.75 0 0 1-19.876 0"/><circle cx="12" cy="12" r="3"/></svg>
<svg class="ic" style="left:2740.4px;top:957px;width:28px;height:28px;" viewBox="0 0 24 24" fill="none" stroke="#94a3b8" stroke-width="2" stroke-linecap="round" stroke-linejoin="round"><path d="M21.174 6.812a1 1 0 0 0-3.986-3.987L3.842 16.174a2 2 0 0 0-.5.83l-1.321 4.352a.5.5 0 0 0 .623.622l4.353-1.32a2 2 0 0 0 .83-.497z"/><path d="m15 5 4 4"/></svg>
<svg class="ic" style="left:2800px;top:957px;width:28px;height:28px;" viewBox="0 0 24 24" fill="none" stroke="#cbd5e1" stroke-width="2" stroke-linecap="round" stroke-linejoin="round"><path d="M20 13c0 5-3.5 7.5-7.66 8.95a1 1 0 0 1-.67-.01C7.5 20.5 4 18 4 13V6a1 1 0 0 1 1-1c2 0 4.5-1.2 6.24-2.72a1.17 1.17 0 0 1 1.52 0C14.51 3.81 17 5 19 5a1 1 0 0 1 1 1z"/><path d="m9 12 2 2 4-4"/></svg>
<div class="abs" style="left:490px;top:1153px;width:2408px;height:2px;background:#f1f5f9"></div>
<div class="t" style="left:522.6px;top:1073px;font-size:27px;line-height:40px;color:#1e293b;font-weight:normal;-webkit-text-stroke:0.5px currentColor;">GPR_4</div>
<div class="t" style="left:694.6px;top:1073px;font-size:28px;line-height:40px;color:#1e293b;font-weight:normal;-webkit-text-stroke:0.5px currentColor;">#1</div>
<div class="t" style="left:934px;top:1073px;font-size:29.4px;line-height:40px;color:#64748b;font-weight:normal;">26 Feb 2026</div>
<div class="t" style="left:1199.6px;top:1057.1px;font-size:28.6px;line-height:40px;color:#1e293b;font-weight:normal;">FO****</div>
<div class="t" style="left:1198.6px;top:1098.8px;font-size:24px;line-height:32px;color:#94a3b8;font-weight:normal;font-family:'Liberation Mono',monospace;">9936<span class="ast">***</span>8</div>
<div class="abs" style="left:1331.6px;top:1098.8px;width:53.8px;height:28px;border-radius:8px;background:#f1f5f9"></div>
<div class="t" style="left:1338.6px;top:1101.4px;font-size:21px;line-height:28px;color:#5b6b82;font-weight:normal;font-family:'Liberation Mono',monospace;">T#1</div>
<div class="t" style="left:1510.2px;top:1073px;font-size:28.4px;line-height:40px;color:#334155;font-weight:normal;"><svg class="rs" viewBox="0 0 7 10" fill="none" stroke="currentColor" stroke-width="1.2" stroke-linecap="butt" stroke-linejoin="miter"><path d="M0.2 0.7H6.9M0.2 3.2H6.9M0.2 0.7H2.4C4.5 0.7 5.5 1.9 5.5 3.3C5.5 4.8 4.4 5.9 2.5 5.9H0.4L5.6 9.95"/></svg>0</div>
<div class="t" style="left:1743.4px;top:1073px;font-size:28.4px;line-height:40px;color:#334155;font-weight:normal;"><svg class="rs" viewBox="0 0 7 10" fill="none" stroke="currentColor" stroke-width="1.2" stroke-linecap="butt" stroke-linejoin="miter"><path d="M0.2 0.7H6.9M0.2 3.2H6.9M0.2 0.7H2.4C4.5 0.7 5.5 1.9 5.5 3.3C5.5 4.8 4.4 5.9 2.5 5.9H0.4L5.6 9.95"/></svg>0</div>
<div class="t" style="left:1947px;top:1073px;font-size:27px;line-height:40px;color:#1e293b;font-weight:normal;-webkit-text-stroke:0.64px currentColor;"><svg class="rs" viewBox="0 0 7 10" fill="none" stroke="currentColor" stroke-width="1.45" stroke-linecap="butt" stroke-linejoin="miter"><path d="M0.2 0.7H6.9M0.2 3.2H6.9M0.2 0.7H2.4C4.5 0.7 5.5 1.9 5.5 3.3C5.5 4.8 4.4 5.9 2.5 5.9H0.4L5.6 9.95"/></svg>14,115</div>
<div class="abs" style="left:2215.6px;top:1074px;width:120px;height:40px;border-radius:20px;background:#f0fdf4;border:2px solid #bbf7d0"></div>
<div class="t" style="left:2232.4px;top:1076px;font-size:26px;line-height:36px;color:#15703d;font-weight:normal;-webkit-text-stroke:0.24px currentColor;">Verified</div>
<div class="abs" style="left:2437.2px;top:1074px;width:143px;height:40px;border-radius:20px;background:#f0fdf4;border:2px solid #bbf7d0"></div>
<div class="t" style="left:2454.8px;top:1076px;font-size:25.8px;line-height:36px;color:#15703d;font-weight:normal;-webkit-text-stroke:0.24px currentColor;">Approved</div>
<svg class="ic" style="left:2680px;top:1079px;width:28px;height:28px;" viewBox="0 0 24 24" fill="none" stroke="#94a3b8" stroke-width="2" stroke-linecap="round" stroke-linejoin="round"><path d="M2.062 12.348a1 1 0 0 1 0-.696 10.75 10.75 0 0 1 19.876 0 1 1 0 0 1 0 .696 10.75 10.75 0 0 1-19.876 0"/><circle cx="12" cy="12" r="3"/></svg>
<svg class="ic" style="left:2740.4px;top:1079px;width:28px;height:28px;" viewBox="0 0 24 24" fill="none" stroke="#94a3b8" stroke-width="2" stroke-linecap="round" stroke-linejoin="round"><path d="M21.174 6.812a1 1 0 0 0-3.986-3.987L3.842 16.174a2 2 0 0 0-.5.83l-1.321 4.352a.5.5 0 0 0 .623.622l4.353-1.32a2 2 0 0 0 .83-.497z"/><path d="m15 5 4 4"/></svg>
<svg class="ic" style="left:2800px;top:1079px;width:28px;height:28px;" viewBox="0 0 24 24" fill="none" stroke="#cbd5e1" stroke-width="2" stroke-linecap="round" stroke-linejoin="round"><path d="M20 13c0 5-3.5 7.5-7.66 8.95a1 1 0 0 1-.67-.01C7.5 20.5 4 18 4 13V6a1 1 0 0 1 1-1c2 0 4.5-1.2 6.24-2.72a1.17 1.17 0 0 1 1.52 0C14.51 3.81 17 5 19 5a1 1 0 0 1 1 1z"/><path d="m9 12 2 2 4-4"/></svg>
<div class="abs" style="left:490px;top:1275px;width:2408px;height:2px;background:#f1f5f9"></div>
<div class="t" style="left:522.6px;top:1195px;font-size:27px;line-height:40px;color:#1e293b;font-weight:normal;-webkit-text-stroke:0.5px currentColor;">GRP_2</div>
<div class="t" style="left:694.6px;top:1195px;font-size:28px;line-height:40px;color:#1e293b;font-weight:normal;-webkit-text-stroke:0.5px currentColor;">#5</div>
<div class="t" style="left:934px;top:1195px;font-size:29.4px;line-height:40px;color:#64748b;font-weight:normal;">26 Feb 2026</div>
<div class="t" style="left:1199.6px;top:1179.1px;font-size:28.6px;line-height:40px;color:#1e293b;font-weight:normal;">AJ** KU**</div>
<div class="t" style="left:1198.6px;top:1220.8px;font-size:24px;line-height:32px;color:#94a3b8;font-weight:normal;font-family:'Liberation Mono',monospace;">8795<span class="ast">***</span>5</div>
<div class="abs" style="left:1331.6px;top:1220.8px;width:53.8px;height:28px;border-radius:8px;background:#f1f5f9"></div>
<div class="t" style="left:1338.6px;top:1223.4px;font-size:21px;line-height:28px;color:#5b6b82;font-weight:normal;font-family:'Liberation Mono',monospace;">T#4</div>
<div class="t" style="left:1510.2px;top:1195px;font-size:28.4px;line-height:40px;color:#334155;font-weight:normal;"><svg class="rs" viewBox="0 0 7 10" fill="none" stroke="currentColor" stroke-width="1.2" stroke-linecap="butt" stroke-linejoin="miter"><path d="M0.2 0.7H6.9M0.2 3.2H6.9M0.2 0.7H2.4C4.5 0.7 5.5 1.9 5.5 3.3C5.5 4.8 4.4 5.9 2.5 5.9H0.4L5.6 9.95"/></svg>0</div>
<div class="t" style="left:1743.4px;top:1195px;font-size:28.4px;line-height:40px;color:#334155;font-weight:normal;"><svg class="rs" viewBox="0 0 7 10" fill="none" stroke="currentColor" stroke-width="1.2" stroke-linecap="butt" stroke-linejoin="miter"><path d="M0.2 0.7H6.9M0.2 3.2H6.9M0.2 0.7H2.4C4.5 0.7 5.5 1.9 5.5 3.3C5.5 4.8 4.4 5.9 2.5 5.9H0.4L5.6 9.95"/></svg>0</div>
<div class="t" style="left:1947px;top:1195px;font-size:27px;line-height:40px;color:#1e293b;font-weight:normal;-webkit-text-stroke:0.64px currentColor;"><svg class="rs" viewBox="0 0 7 10" fill="none" stroke="currentColor" stroke-width="1.45" stroke-linecap="butt" stroke-linejoin="miter"><path d="M0.2 0.7H6.9M0.2 3.2H6.9M0.2 0.7H2.4C4.5 0.7 5.5 1.9 5.5 3.3C5.5 4.8 4.4 5.9 2.5 5.9H0.4L5.6 9.95"/></svg>11,292</div>
<div class="abs" style="left:2215.6px;top:1196px;width:120px;height:40px;border-radius:20px;background:#f0fdf4;border:2px solid #bbf7d0"></div>
<div class="t" style="left:2232.4px;top:1198px;font-size:26px;line-height:36px;color:#15703d;font-weight:normal;-webkit-text-stroke:0.24px currentColor;">Verified</div>
<div class="abs" style="left:2437.2px;top:1196px;width:143px;height:40px;border-radius:20px;background:#f0fdf4;border:2px solid #bbf7d0"></div>
<div class="t" style="left:2454.8px;top:1198px;font-size:25.8px;line-height:36px;color:#15703d;font-weight:normal;-webkit-text-stroke:0.24px currentColor;">Approved</div>
<svg class="ic" style="left:2680px;top:1201px;width:28px;height:28px;" viewBox="0 0 24 24" fill="none" stroke="#94a3b8" stroke-width="2" stroke-linecap="round" stroke-linejoin="round"><path d="M2.062 12.348a1 1 0 0 1 0-.696 10.75 10.75 0 0 1 19.876 0 1 1 0 0 1 0 .696 10.75 10.75 0 0 1-19.876 0"/><circle cx="12" cy="12" r="3"/></svg>
<svg class="ic" style="left:2740.4px;top:1201px;width:28px;height:28px;" viewBox="0 0 24 24" fill="none" stroke="#94a3b8" stroke-width="2" stroke-linecap="round" stroke-linejoin="round"><path d="M21.174 6.812a1 1 0 0 0-3.986-3.987L3.842 16.174a2 2 0 0 0-.5.83l-1.321 4.352a.5.5 0 0 0 .623.622l4.353-1.32a2 2 0 0 0 .83-.497z"/><path d="m15 5 4 4"/></svg>
<svg class="ic" style="left:2800px;top:1201px;width:28px;height:28px;" viewBox="0 0 24 24" fill="none" stroke="#cbd5e1" stroke-width="2" stroke-linecap="round" stroke-linejoin="round"><path d="M20 13c0 5-3.5 7.5-7.66 8.95a1 1 0 0 1-.67-.01C7.5 20.5 4 18 4 13V6a1 1 0 0 1 1-1c2 0 4.5-1.2 6.24-2.72a1.17 1.17 0 0 1 1.52 0C14.51 3.81 17 5 19 5a1 1 0 0 1 1 1z"/><path d="m9 12 2 2 4-4"/></svg>
<div class="abs" style="left:490px;top:1397px;width:2408px;height:2px;background:#f1f5f9"></div>
<div class="t" style="left:522.6px;top:1317px;font-size:27px;line-height:40px;color:#1e293b;font-weight:normal;-webkit-text-stroke:0.5px currentColor;">GRP_2</div>
<div class="t" style="left:694.6px;top:1317px;font-size:28px;line-height:40px;color:#1e293b;font-weight:normal;-webkit-text-stroke:0.5px currentColor;">#4</div>
<div class="t" style="left:934px;top:1317px;font-size:29.4px;line-height:40px;color:#64748b;font-weight:normal;">26 Feb 2026</div>
<div class="t" style="left:1199.6px;top:1301.1px;font-size:28.6px;line-height:40px;color:#1e293b;font-weight:normal;">AB** RA**</div>
<div class="t" style="left:1198.6px;top:1342.8px;font-size:24px;line-height:32px;color:#94a3b8;font-weight:normal;font-family:'Liberation Mono',monospace;">9793<span class="ast">***</span>20</div>
<div class="abs" style="left:1346px;top:1342.8px;width:53.8px;height:28px;border-radius:8px;background:#f1f5f9"></div>
<div class="t" style="left:1353px;top:1345.4px;font-size:21px;line-height:28px;color:#5b6b82;font-weight:normal;font-family:'Liberation Mono',monospace;">T#2</div>
<div class="t" style="left:1510.2px;top:1317px;font-size:28.4px;line-height:40px;color:#334155;font-weight:normal;"><svg class="rs" viewBox="0 0 7 10" fill="none" stroke="currentColor" stroke-width="1.2" stroke-linecap="butt" stroke-linejoin="miter"><path d="M0.2 0.7H6.9M0.2 3.2H6.9M0.2 0.7H2.4C4.5 0.7 5.5 1.9 5.5 3.3C5.5 4.8 4.4 5.9 2.5 5.9H0.4L5.6 9.95"/></svg>4,000</div>
<div class="t" style="left:1743.4px;top:1317px;font-size:28.4px;line-height:40px;color:#334155;font-weight:normal;"><svg class="rs" viewBox="0 0 7 10" fill="none" stroke="currentColor" stroke-width="1.2" stroke-linecap="butt" stroke-linejoin="miter"><path d="M0.2 0.7H6.9M0.2 3.2H6.9M0.2 0.7H2.4C4.5 0.7 5.5 1.9 5.5 3.3C5.5 4.8 4.4 5.9 2.5 5.9H0.4L5.6 9.95"/></svg>800</div>
<div class="t" style="left:1947px;top:1317px;font-size:27px;line-height:40px;color:#1e293b;font-weight:normal;-webkit-text-stroke:0.64px currentColor;"><svg class="rs" viewBox="0 0 7 10" fill="none" stroke="currentColor" stroke-width="1.45" stroke-linecap="butt" stroke-linejoin="miter"><path d="M0.2 0.7H6.9M0.2 3.2H6.9M0.2 0.7H2.4C4.5 0.7 5.5 1.9 5.5 3.3C5.5 4.8 4.4 5.9 2.5 5.9H0.4L5.6 9.95"/></svg>7,292</div>
<div class="abs" style="left:2215.6px;top:1318px;width:120px;height:40px;border-radius:20px;background:#f0fdf4;border:2px solid #bbf7d0"></div>
<div class="t" style="left:2232.4px;top:1320px;font-size:26px;line-height:36px;color:#15703d;font-weight:normal;-webkit-text-stroke:0.24px currentColor;">Verified</div>
<div class="abs" style="left:2437.2px;top:1318px;width:143px;height:40px;border-radius:20px;background:#f0fdf4;border:2px solid #bbf7d0"></div>
<div class="t" style="left:2454.8px;top:1320px;font-size:25.8px;line-height:36px;color:#15703d;font-weight:normal;-webkit-text-stroke:0.24px currentColor;">Approved</div>
<svg class="ic" style="left:2680px;top:1323px;width:28px;height:28px;" viewBox="0 0 24 24" fill="none" stroke="#94a3b8" stroke-width="2" stroke-linecap="round" stroke-linejoin="round"><path d="M2.062 12.348a1 1 0 0 1 0-.696 10.75 10.75 0 0 1 19.876 0 1 1 0 0 1 0 .696 10.75 10.75 0 0 1-19.876 0"/><circle cx="12" cy="12" r="3"/></svg>
<svg class="ic" style="left:2740.4px;top:1323px;width:28px;height:28px;" viewBox="0 0 24 24" fill="none" stroke="#94a3b8" stroke-width="2" stroke-linecap="round" stroke-linejoin="round"><path d="M21.174 6.812a1 1 0 0 0-3.986-3.987L3.842 16.174a2 2 0 0 0-.5.83l-1.321 4.352a.5.5 0 0 0 .623.622l4.353-1.32a2 2 0 0 0 .83-.497z"/><path d="m15 5 4 4"/></svg>
<svg class="ic" style="left:2800px;top:1323px;width:28px;height:28px;" viewBox="0 0 24 24" fill="none" stroke="#cbd5e1" stroke-width="2" stroke-linecap="round" stroke-linejoin="round"><path d="M20 13c0 5-3.5 7.5-7.66 8.95a1 1 0 0 1-.67-.01C7.5 20.5 4 18 4 13V6a1 1 0 0 1 1-1c2 0 4.5-1.2 6.24-2.72a1.17 1.17 0 0 1 1.52 0C14.51 3.81 17 5 19 5a1 1 0 0 1 1 1z"/><path d="m9 12 2 2 4-4"/></svg>
<div class="abs" style="left:490px;top:1519px;width:2408px;height:2px;background:#f1f5f9"></div>
<div class="t" style="left:522.6px;top:1439px;font-size:27px;line-height:40px;color:#1e293b;font-weight:normal;-webkit-text-stroke:0.5px currentColor;">GRP_2</div>
<div class="t" style="left:694.6px;top:1439px;font-size:28px;line-height:40px;color:#1e293b;font-weight:normal;-webkit-text-stroke:0.5px currentColor;">#3</div>
<div class="t" style="left:934px;top:1439px;font-size:29.4px;line-height:40px;color:#64748b;font-weight:normal;">26 Feb 2026</div>
<div class="t" style="left:1199.6px;top:1423.1px;font-size:28.6px;line-height:40px;color:#1e293b;font-weight:normal;">AM** KA**</div>
<div class="t" style="left:1198.6px;top:1464.8px;font-size:24px;line-height:32px;color:#94a3b8;font-weight:normal;font-family:'Liberation Mono',monospace;">9415<span class="ast">***</span>48</div>
<div class="abs" style="left:1346px;top:1464.8px;width:53.8px;height:28px;border-radius:8px;background:#f1f5f9"></div>
<div class="t" style="left:1353px;top:1467.4px;font-size:21px;line-height:28px;color:#5b6b82;font-weight:normal;font-family:'Liberation Mono',monospace;">T#5</div>
<div class="t" style="left:1510.2px;top:1439px;font-size:28.4px;line-height:40px;color:#334155;font-weight:normal;"><svg class="rs" viewBox="0 0 7 10" fill="none" stroke="currentColor" stroke-width="1.2" stroke-linecap="butt" stroke-linejoin="miter"><path d="M0.2 0.7H6.9M0.2 3.2H6.9M0.2 0.7H2.4C4.5 0.7 5.5 1.9 5.5 3.3C5.5 4.8 4.4 5.9 2.5 5.9H0.4L5.6 9.95"/></svg>3,000</div>
<div class="t" style="left:1743.4px;top:1439px;font-size:28.4px;line-height:40px;color:#334155;font-weight:normal;"><svg class="rs" viewBox="0 0 7 10" fill="none" stroke="currentColor" stroke-width="1.2" stroke-linecap="butt" stroke-linejoin="miter"><path d="M0.2 0.7H6.9M0.2 3.2H6.9M0.2 0.7H2.4C4.5 0.7 5.5 1.9 5.5 3.3C5.5 4.8 4.4 5.9 2.5 5.9H0.4L5.6 9.95"/></svg>600</div>
<div class="t" style="left:1947px;top:1439px;font-size:27px;line-height:40px;color:#1e293b;font-weight:normal;-webkit-text-stroke:0.64px currentColor;"><svg class="rs" viewBox="0 0 7 10" fill="none" stroke="currentColor" stroke-width="1.45" stroke-linecap="butt" stroke-linejoin="miter"><path d="M0.2 0.7H6.9M0.2 3.2H6.9M0.2 0.7H2.4C4.5 0.7 5.5 1.9 5.5 3.3C5.5 4.8 4.4 5.9 2.5 5.9H0.4L5.6 9.95"/></svg>8,292</div>
<div class="abs" style="left:2215.6px;top:1440px;width:120px;height:40px;border-radius:20px;background:#f0fdf4;border:2px solid #bbf7d0"></div>
<div class="t" style="left:2232.4px;top:1442px;font-size:26px;line-height:36px;color:#15703d;font-weight:normal;-webkit-text-stroke:0.24px currentColor;">Verified</div>
<div class="abs" style="left:2437.2px;top:1440px;width:143px;height:40px;border-radius:20px;background:#f0fdf4;border:2px solid #bbf7d0"></div>
<div class="t" style="left:2454.8px;top:1442px;font-size:25.8px;line-height:36px;color:#15703d;font-weight:normal;-webkit-text-stroke:0.24px currentColor;">Approved</div>
<svg class="ic" style="left:2680px;top:1445px;width:28px;height:28px;" viewBox="0 0 24 24" fill="none" stroke="#94a3b8" stroke-width="2" stroke-linecap="round" stroke-linejoin="round"><path d="M2.062 12.348a1 1 0 0 1 0-.696 10.75 10.75 0 0 1 19.876 0 1 1 0 0 1 0 .696 10.75 10.75 0 0 1-19.876 0"/><circle cx="12" cy="12" r="3"/></svg>
<svg class="ic" style="left:2740.4px;top:1445px;width:28px;height:28px;" viewBox="0 0 24 24" fill="none" stroke="#94a3b8" stroke-width="2" stroke-linecap="round" stroke-linejoin="round"><path d="M21.174 6.812a1 1 0 0 0-3.986-3.987L3.842 16.174a2 2 0 0 0-.5.83l-1.321 4.352a.5.5 0 0 0 .623.622l4.353-1.32a2 2 0 0 0 .83-.497z"/><path d="m15 5 4 4"/></svg>
<svg class="ic" style="left:2800px;top:1445px;width:28px;height:28px;" viewBox="0 0 24 24" fill="none" stroke="#cbd5e1" stroke-width="2" stroke-linecap="round" stroke-linejoin="round"><path d="M20 13c0 5-3.5 7.5-7.66 8.95a1 1 0 0 1-.67-.01C7.5 20.5 4 18 4 13V6a1 1 0 0 1 1-1c2 0 4.5-1.2 6.24-2.72a1.17 1.17 0 0 1 1.52 0C14.51 3.81 17 5 19 5a1 1 0 0 1 1 1z"/><path d="m9 12 2 2 4-4"/></svg>
<div class="abs" style="left:490px;top:1641px;width:2408px;height:2px;background:#f1f5f9"></div>
<div class="t" style="left:522.6px;top:1561px;font-size:27px;line-height:40px;color:#1e293b;font-weight:normal;-webkit-text-stroke:0.5px currentColor;">GRP_2</div>
<div class="t" style="left:694.6px;top:1561px;font-size:28px;line-height:40px;color:#1e293b;font-weight:normal;-webkit-text-stroke:0.5px currentColor;">#2</div>
<div class="t" style="left:934px;top:1561px;font-size:29.4px;line-height:40px;color:#64748b;font-weight:normal;">26 Feb 2026</div>
<div class="t" style="left:1199.6px;top:1545.1px;font-size:28.6px;line-height:40px;color:#1e293b;font-weight:normal;">AD** TI**</div>
<div class="t" style="left:1198.6px;top:1586.8px;font-size:24px;line-height:32px;color:#94a3b8;font-weight:normal;font-family:'Liberation Mono',monospace;">9140<span class="ast">***</span>13</div>
<div class="abs" style="left:1346px;top:1586.8px;width:53.8px;height:28px;border-radius:8px;background:#f1f5f9"></div>
<div class="t" style="left:1353px;top:1589.4px;font-size:21px;line-height:28px;color:#5b6b82;font-weight:normal;font-family:'Liberation Mono',monospace;">T#3</div>
<div class="t" style="left:1510.2px;top:1561px;font-size:28.4px;line-height:40px;color:#334155;font-weight:normal;"><svg class="rs" viewBox="0 0 7 10" fill="none" stroke="currentColor" stroke-width="1.2" stroke-linecap="butt" stroke-linejoin="miter"><path d="M0.2 0.7H6.9M0.2 3.2H6.9M0.2 0.7H2.4C4.5 0.7 5.5 1.9 5.5 3.3C5.5 4.8 4.4 5.9 2.5 5.9H0.4L5.6 9.95"/></svg>2,000</div>
<div class="t" style="left:1743.4px;top:1561px;font-size:28.4px;line-height:40px;color:#334155;font-weight:normal;"><svg class="rs" viewBox="0 0 7 10" fill="none" stroke="currentColor" stroke-width="1.2" stroke-linecap="butt" stroke-linejoin="miter"><path d="M0.2 0.7H6.9M0.2 3.2H6.9M0.2 0.7H2.4C4.5 0.7 5.5 1.9 5.5 3.3C5.5 4.8 4.4 5.9 2.5 5.9H0.4L5.6 9.95"/></svg>400</div>
<div class="t" style="left:1947px;top:1561px;font-size:27px;line-height:40px;color:#1e293b;font-weight:normal;-webkit-text-stroke:0.64px currentColor;"><svg class="rs" viewBox="0 0 7 10" fill="none" stroke="currentColor" stroke-width="1.45" stroke-linecap="butt" stroke-linejoin="miter"><path d="M0.2 0.7H6.9M0.2 3.2H6.9M0.2 0.7H2.4C4.5 0.7 5.5 1.9 5.5 3.3C5.5 4.8 4.4 5.9 2.5 5.9H0.4L5.6 9.95"/></svg>9,292</div>
<div class="abs" style="left:2215.6px;top:1562px;width:120px;height:40px;border-radius:20px;background:#f0fdf4;border:2px solid #bbf7d0"></div>
<div class="t" style="left:2232.4px;top:1564px;font-size:26px;line-height:36px;color:#15703d;font-weight:normal;-webkit-text-stroke:0.24px currentColor;">Verified</div>
<div class="abs" style="left:2437.2px;top:1562px;width:143px;height:40px;border-radius:20px;background:#f0fdf4;border:2px solid #bbf7d0"></div>
<div class="t" style="left:2454.8px;top:1564px;font-size:25.8px;line-height:36px;color:#15703d;font-weight:normal;-webkit-text-stroke:0.24px currentColor;">Approved</div>
<svg class="ic" style="left:2680px;top:1567px;width:28px;height:28px;" viewBox="0 0 24 24" fill="none" stroke="#94a3b8" stroke-width="2" stroke-linecap="round" stroke-linejoin="round"><path d="M2.062 12.348a1 1 0 0 1 0-.696 10.75 10.75 0 0 1 19.876 0 1 1 0 0 1 0 .696 10.75 10.75 0 0 1-19.876 0"/><circle cx="12" cy="12" r="3"/></svg>
<svg class="ic" style="left:2740.4px;top:1567px;width:28px;height:28px;" viewBox="0 0 24 24" fill="none" stroke="#94a3b8" stroke-width="2" stroke-linecap="round" stroke-linejoin="round"><path d="M21.174 6.812a1 1 0 0 0-3.986-3.987L3.842 16.174a2 2 0 0 0-.5.83l-1.321 4.352a.5.5 0 0 0 .623.622l4.353-1.32a2 2 0 0 0 .83-.497z"/><path d="m15 5 4 4"/></svg>
<svg class="ic" style="left:2800px;top:1567px;width:28px;height:28px;" viewBox="0 0 24 24" fill="none" stroke="#cbd5e1" stroke-width="2" stroke-linecap="round" stroke-linejoin="round"><path d="M20 13c0 5-3.5 7.5-7.66 8.95a1 1 0 0 1-.67-.01C7.5 20.5 4 18 4 13V6a1 1 0 0 1 1-1c2 0 4.5-1.2 6.24-2.72a1.17 1.17 0 0 1 1.52 0C14.51 3.81 17 5 19 5a1 1 0 0 1 1 1z"/><path d="m9 12 2 2 4-4"/></svg>
</div></body></html>
